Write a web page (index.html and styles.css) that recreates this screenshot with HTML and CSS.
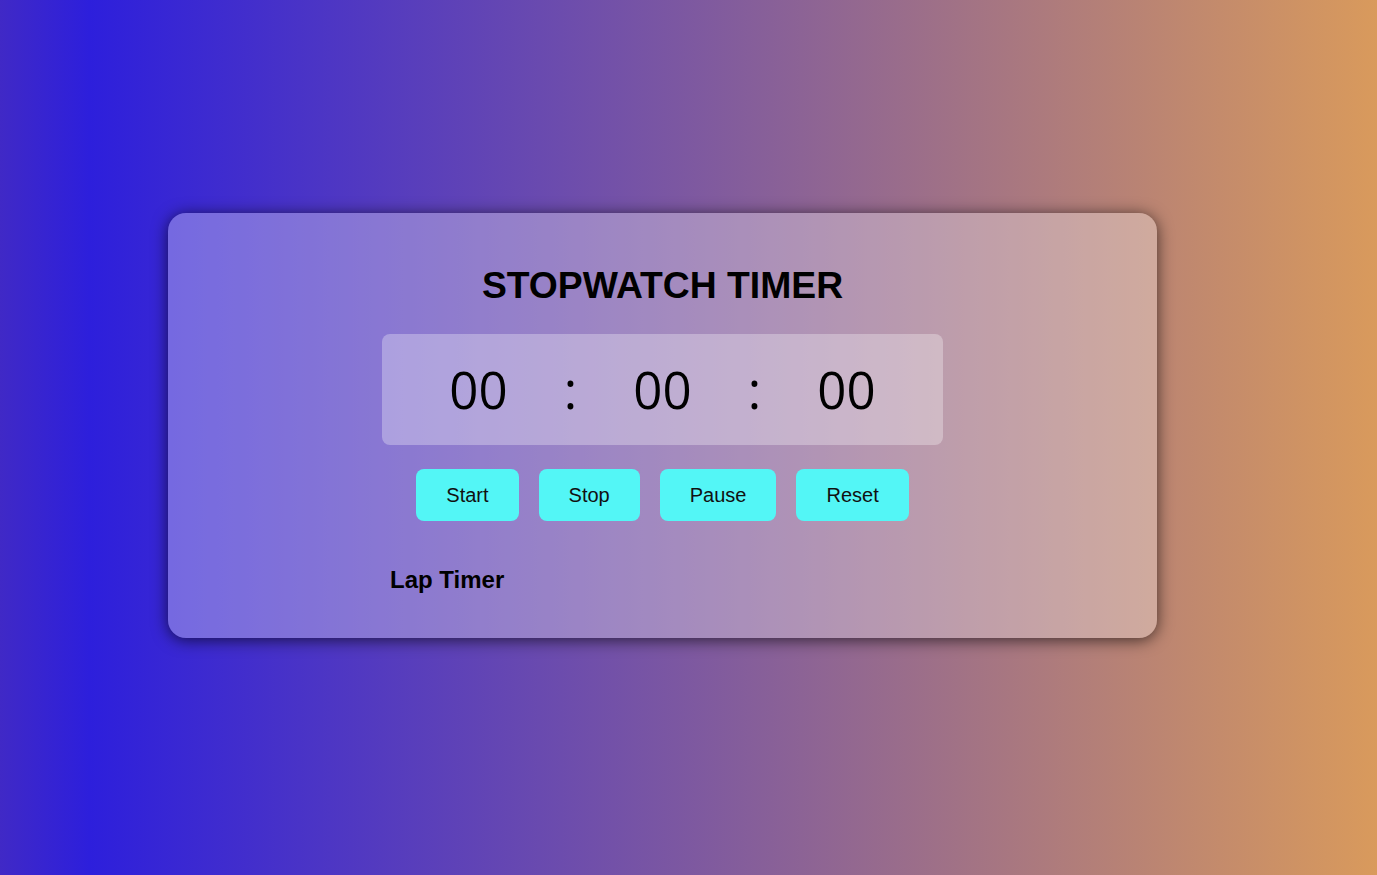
FILE: index.html
```html
<!DOCTYPE html>
<html lang="en">
<head>
<meta charset="utf-8">
<title>Stopwatch Timer</title>
<link rel="stylesheet" href="styles.css">
</head>
<body>
  <main class="card">
    <h1 class="title">STOPWATCH TIMER</h1>
    <div class="display">
      <span class="seg">00</span>
      <span class="colon">:</span>
      <span class="seg">00</span>
      <span class="colon">:</span>
      <span class="seg">00</span>
    </div>
    <div class="controls">
      <button class="btn btn-start">Start</button>
      <button class="btn btn-stop">Stop</button>
      <button class="btn btn-pause">Pause</button>
      <button class="btn btn-reset">Reset</button>
    </div>
    <section class="laps">
      <h3 class="laps-title">Lap Timer</h3>
    </section>
  </main>
</body>
</html>
```
FILE: styles.css
```css
* { box-sizing: border-box; }

html, body { height: 100%; }

body {
  margin: 0;
  padding-top: 213px;
  font-family: "Liberation Sans", Arial, sans-serif;
  background: linear-gradient(to right, #4029c6 0%, #2d1fdc 6.5%, #d99a5c 100%);
  overflow: hidden;
}

.card {
  width: 989px;
  height: 425px;
  margin-left: 168px;
  padding: 52px 0 0;
  border-radius: 18px;
  background: rgba(255, 255, 255, 0.31);
  box-shadow: 0 2px 16px rgba(0, 0, 0, 0.65);
  display: flex;
  flex-direction: column;
  align-items: center;
}

.title {
  margin: 0;
  font-size: 37.3px;
  line-height: 41px;
  font-weight: 700;
  color: #000;
}

.display {
  margin-top: 28px;
  width: 561px;
  height: 111px;
  border-radius: 8px;
  background: rgba(255, 255, 255, 0.3);
  display: flex;
  justify-content: center;
  align-items: center;
  font-family: "Open Sans", "Noto Sans", sans-serif;
  font-size: 51px;
  line-height: 1;
  color: #000;
}

.seg {
  width: 100px;
  text-align: center;
}

.colon {
  width: 84px;
  text-align: center;
}

.controls {
  margin-top: 24px;
  display: flex;
  gap: 20px;
}

.btn {
  height: 52px;
  padding: 0 30px;
  border: none;
  border-radius: 8px;
  background: #53f6f6;
  color: #111;
  font-family: "Liberation Sans", Arial, sans-serif;
  font-size: 20px;
}

.laps {
  margin-top: 45px;
  width: 561px;
  padding: 0 8px;
}

.laps-title {
  margin: 0;
  font-size: 24px;
  line-height: 28px;
  font-weight: 700;
  color: #000;
}
```
